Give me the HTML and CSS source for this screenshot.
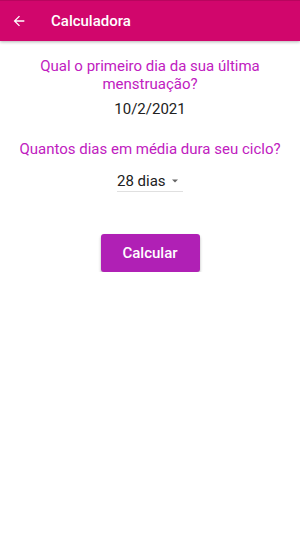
FILE: index.html
```html
<!DOCTYPE html>
<html>
<head>
<meta charset="utf-8">
<link rel="stylesheet" href="styles.css">
</head>
<body>
<header class="appbar">
  <svg class="back" width="16" height="16" viewBox="0 0 24 24"><path d="M20 11H7.83l5.59-5.59L12 4l-8 8 8 8 1.41-1.41L7.83 13H20v-2z" fill="#fff"/></svg>
  <span class="title">Calculadora</span>
</header>
<main class="content">
  <p class="question q1">Qual o primeiro dia da sua última menstruação?</p>
  <p class="value">10/2/2021</p>
  <p class="question q2">Quantos dias em média dura seu ciclo?</p>
  <div class="select">
    <span>28 dias</span>
    <svg width="10" height="10" viewBox="0 0 10 10"><path d="M2 3.5h6L5 6.5z" fill="#666"/></svg>
  </div>
  <button class="btn">Calcular</button>
</main>
</body>
</html>
```
FILE: styles.css
```css
html, body {
  margin: 0;
  padding: 0;
  background: #fff;
  font-family: Roboto, "Noto Sans", sans-serif;
}
.appbar {
  height: 41px;
  background: #d1066c;
  display: flex;
  align-items: center;
  box-shadow: 0 1px 3px rgba(0,0,0,0.3);
  border-top: 1px solid #b8055e;
  box-sizing: border-box;
}
.back {
  margin-left: 11px;
  margin-right: 24px;
}
.title {
  color: #fff;
  font-size: 15px;
  font-weight: 500;
}
.content {
  display: flex;
  flex-direction: column;
  align-items: center;
}
.question {
  margin: 0;
  color: #c020c0;
  font-size: 15px;
  line-height: normal;
  text-align: center;
}
.q1 {
  margin-top: 16px;
  width: 230px;
}
.value {
  margin: 7px 0 0;
  font-size: 15px;
  line-height: normal;
  color: #212121;
}
.q2 {
  margin-top: 22px;
}
.select {
  margin-top: 14px;
  display: flex;
  align-items: center;
  gap: 4px;
  border-bottom: 1px solid #e0e0e0;
  padding: 0 0 1px 0;
  width: 66px;
  box-sizing: border-box;
  font-size: 15px;
  line-height: normal;
  color: #212121;
}
.btn {
  margin-top: 42px;
  width: 99px;
  height: 38px;
  border: none;
  border-radius: 3px;
  background: #b020b5;
  color: #fff;
  font-family: Roboto, sans-serif;
  font-weight: 500;
  font-size: 15px;
  box-shadow: 0 2px 3px rgba(0,0,0,0.3);
}
```
